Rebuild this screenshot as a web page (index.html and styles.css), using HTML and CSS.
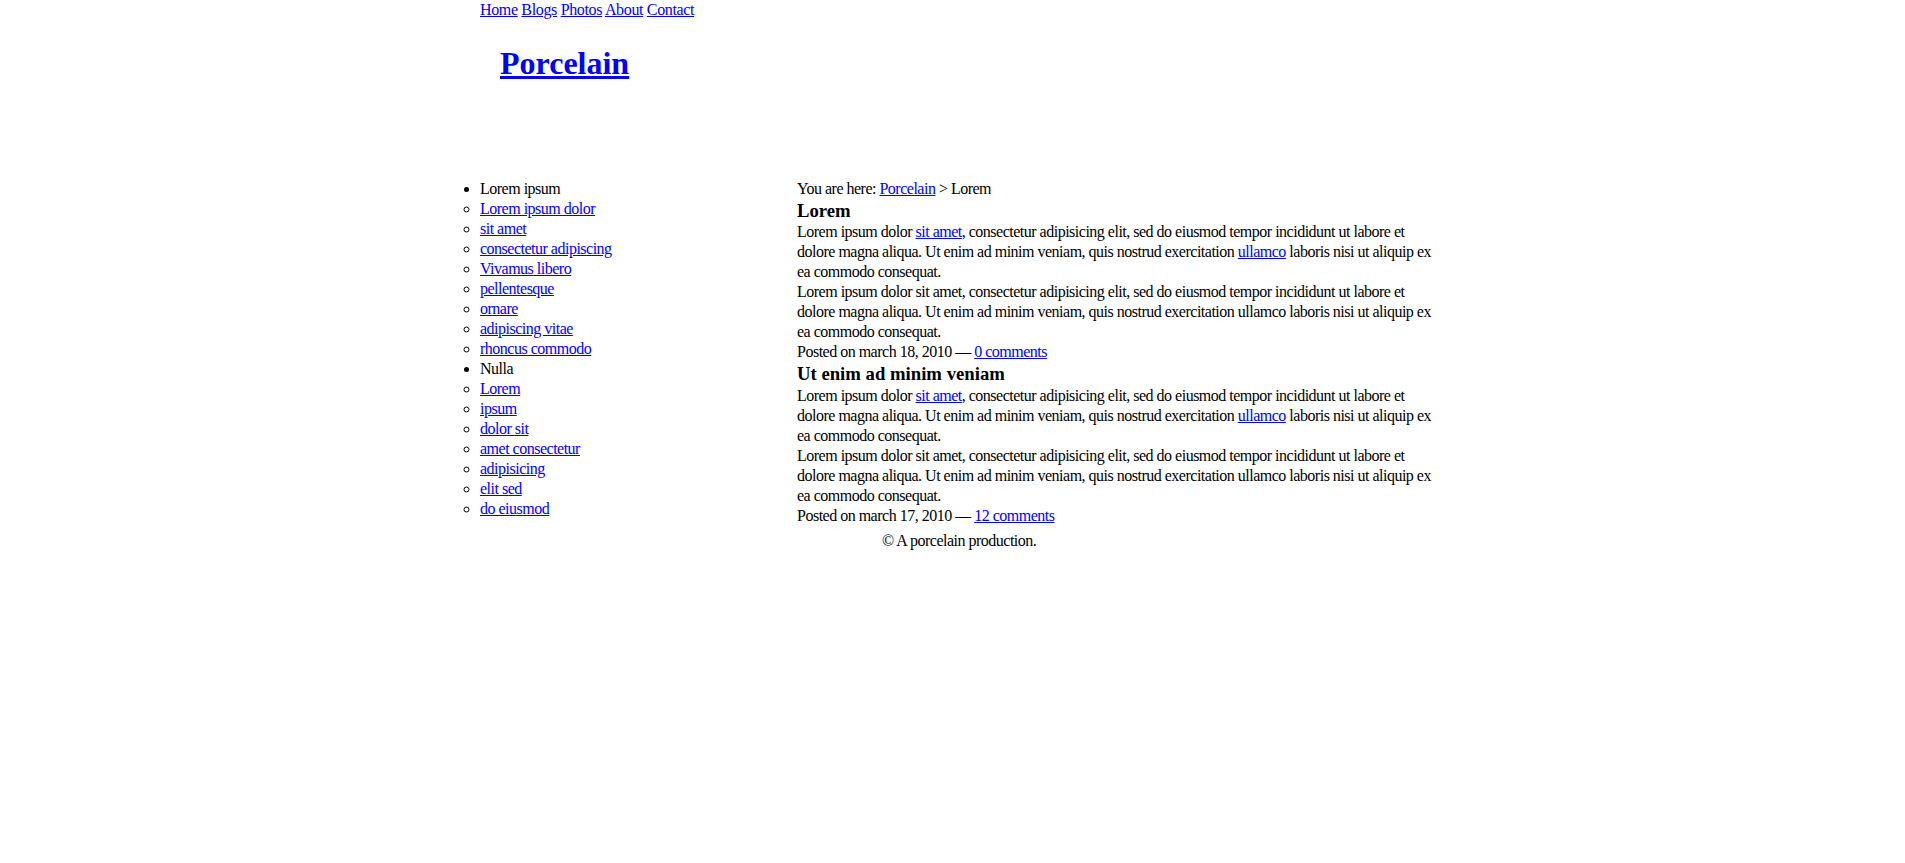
FILE: index.html
```html
<!DOCTYPE html>
<html>
<head>
<meta charset="utf-8">
<title>Porcelain</title>
<link rel="stylesheet" href="styles.css">
</head>
<body>
<div class="page">
  <header class="header">
    <div class="nav"><a href="#">Home</a> <a href="#">Blogs</a> <a href="#">Photos</a> <a href="#">About</a> <a href="#">Contact</a></div>
    <h1 class="site-title"><a href="#">Porcelain</a></h1>
  </header>
  <div class="columns">
    <ul class="sidebar">
      <li class="cat">Lorem ipsum</li>
      <li class="sub"><a href="#">Lorem ipsum dolor</a></li>
      <li class="sub"><a href="#">sit amet</a></li>
      <li class="sub"><a href="#">consectetur adipiscing</a></li>
      <li class="sub"><a href="#">Vivamus libero</a></li>
      <li class="sub"><a href="#">pellentesque</a></li>
      <li class="sub"><a href="#">ornare</a></li>
      <li class="sub"><a href="#">adipiscing vitae</a></li>
      <li class="sub"><a href="#">rhoncus commodo</a></li>
      <li class="cat">Nulla</li>
      <li class="sub"><a href="#">Lorem</a></li>
      <li class="sub"><a href="#">ipsum</a></li>
      <li class="sub"><a href="#">dolor sit</a></li>
      <li class="sub"><a href="#">amet consectetur</a></li>
      <li class="sub"><a href="#">adipisicing</a></li>
      <li class="sub"><a href="#">elit sed</a></li>
      <li class="sub"><a href="#">do eiusmod</a></li>
    </ul>
    <main class="main">
      <div class="crumbs">You are here: <a href="#">Porcelain</a> &gt; Lorem</div>
      <article class="post">
        <h3 class="post-title">Lorem</h3>
        <p class="text">Lorem ipsum dolor <a href="#">sit amet</a>, consectetur adipisicing elit, sed do eiusmod tempor incididunt ut labore et dolore magna aliqua. Ut enim ad minim veniam, quis nostrud exercitation <a href="#">ullamco</a> laboris nisi ut aliquip ex ea commodo consequat.</p>
        <p class="text">Lorem ipsum dolor sit amet, consectetur adipisicing elit, sed do eiusmod tempor incididunt ut labore et dolore magna aliqua. Ut enim ad minim veniam, quis nostrud exercitation ullamco laboris nisi ut aliquip ex ea commodo consequat.</p>
        <div class="meta">Posted on march 18, 2010 — <a href="#">0 comments</a></div>
      </article>
      <article class="post">
        <h3 class="post-title">Ut enim ad minim veniam</h3>
        <p class="text">Lorem ipsum dolor <a href="#">sit amet</a>, consectetur adipisicing elit, sed do eiusmod tempor incididunt ut labore et dolore magna aliqua. Ut enim ad minim veniam, quis nostrud exercitation <a href="#">ullamco</a> laboris nisi ut aliquip ex ea commodo consequat.</p>
        <p class="text">Lorem ipsum dolor sit amet, consectetur adipisicing elit, sed do eiusmod tempor incididunt ut labore et dolore magna aliqua. Ut enim ad minim veniam, quis nostrud exercitation ullamco laboris nisi ut aliquip ex ea commodo consequat.</p>
        <div class="meta">Posted on march 17, 2010 — <a href="#">12 comments</a></div>
      </article>
    </main>
  </div>
  <footer class="footer">© A porcelain production.</footer>
</div>
</body>
</html>
```

FILE: styles.css
```css
html, body {
  margin: 0;
  padding: 0;
  background: #ffffff;
}

body {
  font-family: "Liberation Serif", "Times New Roman", serif;
  font-size: 16px;
  line-height: 1.25;
  color: #000000;
  letter-spacing: -0.5px;
}

a {
  color: #0000ff;
  text-decoration: underline;
}

.page {
  width: 1025px;
  margin: 0 auto;
  padding-top: 1px;
}

.header {
  height: 178px;
}

.nav {
  padding-left: 40px;
  line-height: normal;
  height: 18px;
  letter-spacing: -0.35px;
}

.site-title {
  margin: 24px 0 0 0;
  padding-left: 60px;
  font-size: 32px;
  font-weight: bold;
  line-height: 1.25;
  letter-spacing: 0;
}

.columns {
  display: grid;
  grid-template-columns: 357px 640px;
  align-items: start;
}

.sidebar {
  margin: 0;
  padding: 0 0 0 40px;
}

.sidebar .cat {
  list-style-type: disc;
}

.sidebar .sub {
  list-style-type: circle;
}

.main {
  display: flex;
  flex-direction: column;
}

.post-title {
  margin: 0;
  font-size: 18.72px;
  font-weight: bold;
  line-height: 1.25;
  letter-spacing: 0;
}

.text {
  margin: 0;
}

.footer {
  margin-top: 5px;
  padding-left: 442px;
}
```
